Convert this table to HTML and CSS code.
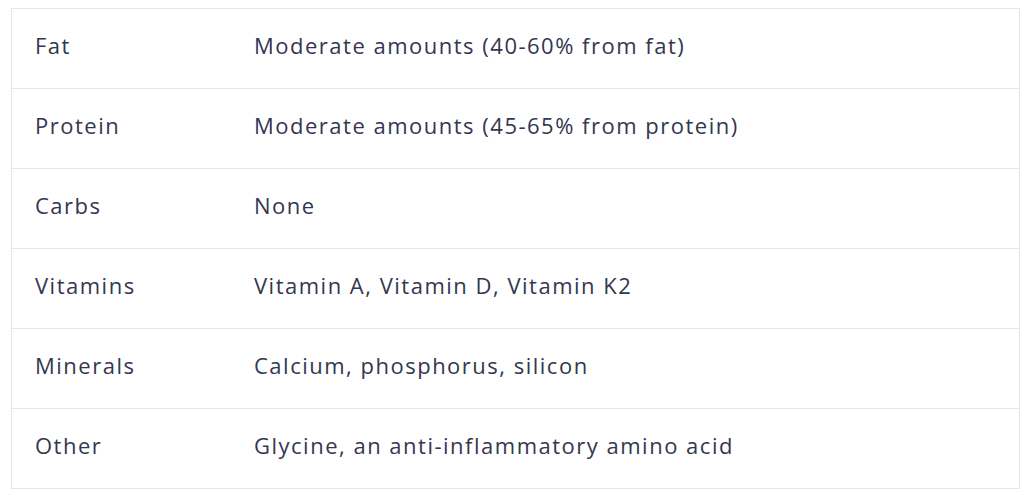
FILE: index.html
```html
<!DOCTYPE html>
<html lang="en">
<head>
<meta charset="utf-8">
<link rel="stylesheet" href="styles.css">
</head>
<body>
<div class="wrap">
  <table class="nutri">
    <tbody>
      <tr><td class="k">Fat</td><td class="v">Moderate amounts (40-60% from fat)</td></tr>
      <tr><td class="k">Protein</td><td class="v">Moderate amounts (45-65% from protein)</td></tr>
      <tr><td class="k">Carbs</td><td class="v">None</td></tr>
      <tr><td class="k">Vitamins</td><td class="v">Vitamin A, Vitamin D, Vitamin K2</td></tr>
      <tr><td class="k">Minerals</td><td class="v">Calcium, phosphorus, silicon</td></tr>
      <tr><td class="k">Other</td><td class="v">Glycine, an anti-inflammatory amino acid</td></tr>
    </tbody>
  </table>
</div>
</body>
</html>
```
FILE: styles.css
```css
html, body {
  margin: 0;
  padding: 0;
  background: #ffffff;
}
.wrap {
  padding: 8px 6px 0 11px;
}
.nutri {
  width: 1009px;
  border-collapse: collapse;
  border: 1px solid #e6e6e6;
  font-family: "Open Sans", "Noto Sans", sans-serif;
  font-size: 22px;
  color: #33374f;
  letter-spacing: 1.5px;
}
.nutri tr {
  height: 80px;
  border-bottom: 1px solid #e6e6e6;
}
.nutri td {
  padding: 0 0 7px 23px;
  vertical-align: middle;
}
.nutri td.k {
  width: 196px;
}
```
